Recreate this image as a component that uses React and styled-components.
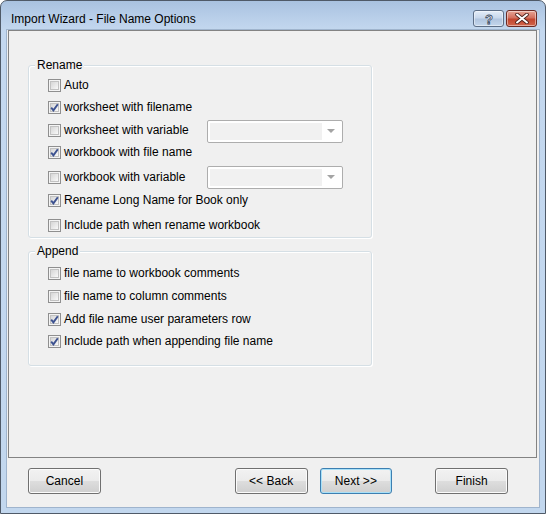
import React from "react";
import styled, { createGlobalStyle, css } from "styled-components";

const GlobalStyle = createGlobalStyle`
  html, body {
    margin: 0;
    padding: 0;
    background: #ffffff;
  }
  body {
    font-family: "Liberation Sans", Arial, sans-serif;
    font-size: 12px;
    color: #000000;
  }
`;

const Window = styled.div`
  box-sizing: border-box;
  width: 546px;
  height: 514px;
  border: 1px solid #4f5a68;
  border-radius: 7px 7px 0 0;
  background: linear-gradient(#a9c2e0 0px, #bad0ea 18px, #c4d8ef 30px, #c2d7ee 100%);
  display: flex;
  flex-direction: column;
  overflow: hidden;
`;

const TitleBar = styled.div`
  height: 29px;
  flex: 0 0 29px;
  display: flex;
  align-items: flex-start;
  padding: 0 8px 0 10px;
`;

const Title = styled.div`
  margin-top: 11px;
  line-height: 14px;
  font-size: 12px;
  color: #000;
  flex: 1;
`;

const CaptionButton = styled.div`
  box-sizing: border-box;
  width: 31px;
  height: 17px;
  margin-top: 9px;
  margin-left: ${(p) => (p.$close ? "2px" : "0")};
  border: 1px solid ${(p) => (p.$close ? "#6b2a24" : "#5d6e86")};
  border-radius: 3px;
  display: flex;
  align-items: center;
  justify-content: center;
  box-shadow: inset 0 0 0 1px rgba(255, 255, 255, 0.45);
  background: ${(p) =>
    p.$close
      ? "linear-gradient(#e7a596 0%, #d3705f 45%, #c2462f 55%, #d2654c 100%)"
      : "linear-gradient(#e4edf8 0%, #c9d8ec 45%, #b1c5df 55%, #c4d6ec 100%)"};
`;

const Client = styled.div`
  flex: 1;
  margin: 0 6px 6px 6px;
  background: #f0f0f0;
  box-shadow: 0 0 0 1px #9fb4cd;
  display: flex;
  flex-direction: column;
`;

const Panel = styled.div`
  box-sizing: border-box;
  height: 428px;
  margin: 0 2px 0 1px;
  border: 1px solid #838383;
  display: flex;
  flex-direction: column;
  align-items: flex-start;
`;

const GroupBox = styled.div`
  position: relative;
  box-sizing: border-box;
  width: 344px;
  height: ${(p) => p.$height}px;
  margin: ${(p) => p.$top}px 0 0 19px;
  padding: ${(p) => p.$pad}px 0 0 19px;
  border: 1px solid #d5dfe5;
  border-radius: 3px;
  box-shadow: 1px 1px 0 #ffffff, inset 1px 1px 0 #ffffff;
`;

const Legend = styled.span`
  position: absolute;
  top: -8px;
  left: 6px;
  padding: 0 2px;
  line-height: 14px;
  background: #f0f0f0;
`;

const Row = styled.div`
  display: flex;
  align-items: center;
  height: 22px;
  margin-top: ${(p) => p.$space || 0}px;
`;

const Label = styled.label`
  display: flex;
  align-items: center;
  flex: ${(p) => (p.$fixed ? "0 0 159px" : "0 0 auto")};
  white-space: nowrap;
  line-height: 14px;
`;

const Box = styled.span`
  box-sizing: border-box;
  width: 13px;
  height: 13px;
  margin-right: 3px;
  border: 1px solid #8f8f8f;
  background: #f4f4f4;
  padding: 1px;
  display: flex;
`;

const BoxInner = styled.span`
  box-sizing: border-box;
  flex: 1;
  border: 1px solid #c2c2c2;
  background: linear-gradient(135deg, #d6d6d6 0%, #eeeeee 70%, #fafafa 100%);
  position: relative;
`;

const Tick = styled.svg`
  position: absolute;
  left: -2px;
  top: -2px;
  width: 11px;
  height: 11px;
`;

const Combo = styled.div`
  box-sizing: border-box;
  width: 136px;
  height: 23px;
  margin-top: ${(p) => p.$offset || 0}px;
  border: 1px solid #adadad;
  border-radius: 2px;
  background: #ffffff;
  padding: 2px;
  display: flex;
`;

const ComboField = styled.div`
  flex: 1;
  background: #f1f1f1;
`;

const ComboArrow = styled.div`
  width: 18px;
  display: flex;
  align-items: center;
  justify-content: center;
  &::after {
    content: "";
    width: 0;
    height: 0;
    border-left: 4px solid transparent;
    border-right: 4px solid transparent;
    border-top: 4px solid #a4a4a4;
  }
`;

const ButtonRow = styled.div`
  display: flex;
  padding: 10px 31px 0 21px;
`;

const Button = styled.div`
  box-sizing: border-box;
  width: 73px;
  height: 26px;
  margin-left: ${(p) => p.$gap || 0}px;
  border-radius: 3px;
  display: flex;
  align-items: center;
  justify-content: center;
  font-size: 12px;
  background: linear-gradient(#f2f2f2 0%, #ebebeb 48%, #dddddd 52%, #cfcfcf 100%);
  border: 1px solid #707070;
  box-shadow: inset 0 0 0 1px #fbfbfb;
  ${(p) =>
    p.$default &&
    css`
      border-color: #3c7fb1;
      box-shadow: inset 0 0 0 1px #a8e0f8;
    `}
`;

const Check = ({ checked, label, fixed }) => (
  <Label $fixed={fixed}>
    <Box>
      <BoxInner>
        {checked && (
          <Tick viewBox="0 0 11 11">
            <path
              d="M2.2 5.6 L4.4 8.4 L8.8 2.2"
              fill="none"
              stroke="#3d5290"
              strokeWidth="1.9"
            />
          </Tick>
        )}
      </BoxInner>
    </Box>
    {label}
  </Label>
);

const renameRows = [
  { label: "Auto", checked: false, space: 0 },
  { label: "worksheet with filename", checked: true, space: 0 },
  { label: "worksheet with variable", checked: false, space: 1, combo: 2 },
  { label: "workbook with file name", checked: true, space: 0 },
  { label: "workbook with variable", checked: false, space: 3, combo: 0 },
  { label: "Rename Long Name for Book only", checked: true, space: 1 },
  { label: "Include path when rename workbook", checked: false, space: 3 },
];

const appendRows = [
  { label: "file name to workbook comments", checked: false, space: 0 },
  { label: "file name to column comments", checked: false, space: 1 },
  { label: "Add file name user parameters row", checked: true, space: 1 },
  { label: "Include path when appending file name", checked: true, space: 0 },
];

const renderRow = (row) => (
  <Row key={row.label} $space={row.space}>
    <Check
      checked={row.checked}
      label={row.label}
      fixed={row.combo !== undefined}
    />
    {row.combo !== undefined && (
      <Combo $offset={row.combo}>
        <ComboField />
        <ComboArrow />
      </Combo>
    )}
  </Row>
);

const App = () => (
  <>
    <GlobalStyle />
    <Window>
      <TitleBar>
        <Title>Import Wizard - File Name Options</Title>
        <CaptionButton>
          <svg width="12" height="13" viewBox="0 0 12 13">
            <text
              x="6"
              y="11.5"
              textAnchor="middle"
              fontFamily="Liberation Sans, Arial, sans-serif"
              fontWeight="bold"
              fontSize="13"
              fill="#ffffff"
              stroke="#3b4a60"
              strokeWidth="0.8"
            >
              ?
            </text>
          </svg>
        </CaptionButton>
        <CaptionButton $close>
          <svg width="14" height="11" viewBox="0 0 14 11">
            <path
              d="M2 1.5 L12 9.5 M12 1.5 L2 9.5"
              stroke="#4a1f1a"
              strokeWidth="3.6"
              strokeLinecap="round"
            />
            <path
              d="M2 1.5 L12 9.5 M12 1.5 L2 9.5"
              stroke="#ffffff"
              strokeWidth="2"
              strokeLinecap="round"
            />
          </svg>
        </CaptionButton>
      </TitleBar>
      <Client>
        <Panel>
          <GroupBox $top={34} $height={173} $pad={8}>
            <Legend>Rename</Legend>
            {renameRows.map(renderRow)}
          </GroupBox>
          <GroupBox $top={13} $height={115} $pad={10}>
            <Legend>Append</Legend>
            {appendRows.map(renderRow)}
          </GroupBox>
        </Panel>
        <ButtonRow>
          <Button>Cancel</Button>
          <Button $gap={134}>&lt;&lt; Back</Button>
          <Button $gap={12} $default>
            Next &gt;&gt;
          </Button>
          <Button $gap={43}>Finish</Button>
        </ButtonRow>
      </Client>
    </Window>
  </>
);

export default App;
